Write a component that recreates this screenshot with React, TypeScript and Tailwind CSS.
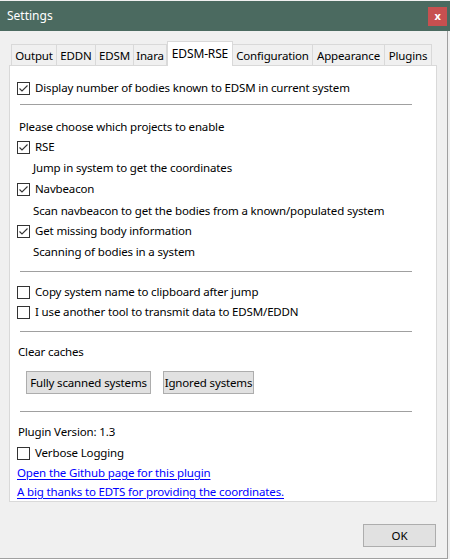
const font = { fontFamily: '"Noto Sans", "Segoe UI", sans-serif' };

const tabs = [
  { label: "Output", w: "w-[46px]" },
  { label: "EDDN", w: "w-[39px]" },
  { label: "EDSM", w: "w-[38px]" },
  { label: "Inara", w: "w-[33px]" },
  { label: "EDSM-RSE", w: "w-[66px]", active: true },
  { label: "Configuration", w: "w-[80px]" },
  { label: "Appearance", w: "w-[72px]" },
  { label: "Plugins", w: "w-[47px]" },
];

function Check({ checked }: { checked?: boolean }) {
  return (
    <span className="w-[13px] h-[13px] border border-[#333333] bg-white flex items-center justify-center shrink-0">
      {checked && (
        <svg width="11" height="11" viewBox="0 0 11 11">
          <polyline points="1.5,5.5 4,8 9.5,2.5" fill="none" stroke="#333333" strokeWidth="1.1" />
        </svg>
      )}
    </span>
  );
}

function CheckRow({ label, checked, mt }: { label: string; checked?: boolean; mt: string }) {
  return (
    <div className={`h-5 flex items-center gap-[5px] pl-[7px] ${mt}`}>
      <Check checked={checked} />
      <span>{label}</span>
    </div>
  );
}

function Sep({ mt }: { mt: string }) {
  return <div className={`h-px bg-[#a0a0a0] ml-[10px] w-[392px] ${mt}`} />;
}

export default function App() {
  return (
    <div
      className="w-[450px] h-[559px] bg-[#f0f0f0] text-[11.5px] tracking-[-0.15px] text-black relative whitespace-nowrap"
      style={font}
    >
      <div className="h-px bg-[#f0f0f0]" />
      <div className="h-[30px] bg-[#4b6a60] flex items-center justify-between pl-[7px]">
        <span className="text-white text-[12px] tracking-normal -mt-[1px]">Settings</span>
        <div className="w-[19px] h-[19px] bg-[#c75050] text-white font-bold text-[11px] flex items-center justify-center mr-[3px]">
          x
        </div>
      </div>
      <div className="border-r border-b border-[#a0a0a0] w-[448px] h-[528px]">
        <div className="flex pl-[11px] pt-[12px] h-[34px] items-end">
          {tabs.map((t) =>
            t.active ? (
              <div
                key={t.label}
                className={`${t.w} h-[25px] bg-white border border-b-0 border-[#d9d9d9] flex items-center justify-center relative z-10 -mb-px text-[12px]`}
              >
                {t.label}
              </div>
            ) : (
              <div
                key={t.label}
                className={`${t.w} h-[21px] border border-l-0 first:border-l border-b-0 border-[#d9d9d9] flex items-center justify-center pt-[2px]`}
              >
                {t.label}
              </div>
            )
          )}
        </div>
        <div className="ml-[9px] w-[428px] h-[437px] bg-white border border-[#d9d9d9] flex flex-col">
          <CheckRow mt="mt-[12px]" checked label="Display number of bodies known to EDSM in current system" />
          <Sep mt="mt-[6px]" />
          <div className="h-5 flex items-center pl-[9px] mt-[12px]">Please choose which projects to enable</div>
          <CheckRow mt="mt-0" checked label="RSE" />
          <div className="h-5 flex items-center pl-[23px] mt-px">Jump in system to get the coordinates</div>
          <CheckRow mt="mt-px" checked label="Navbeacon" />
          <div className="h-5 flex items-center pl-[23px] mt-[2px]">
            Scan navbeacon to get the bodies from a known/populated system
          </div>
          <CheckRow mt="mt-0" checked label="Get missing body information" />
          <div className="h-5 flex items-center pl-[23px] mt-px">Scanning of bodies in a system</div>
          <Sep mt="mt-[9px]" />
          <CheckRow mt="mt-[10px]" label="Copy system name to clipboard after jump" />
          <CheckRow mt="mt-0" label="I use another tool to transmit data to EDSM/EDDN" />
          <Sep mt="mt-[9px]" />
          <div className="h-5 flex items-center pl-[8px] mt-[10px]">Clear caches</div>
          <div className="flex gap-[12px] pl-[16px] mt-[9px]">
            <button className="h-[23px] w-[125px] bg-[#e1e1e1] border border-[#adadad] flex items-center justify-center">
              Fully scanned systems
            </button>
            <button className="h-[23px] w-[91px] bg-[#e1e1e1] border border-[#adadad] flex items-center justify-center">
              Ignored systems
            </button>
          </div>
          <Sep mt="mt-[17px]" />
          <div className="h-5 flex items-center pl-[8px] mt-[10px]">Plugin Version: 1.3</div>
          <CheckRow mt="mt-px" label="Verbose Logging" />
          <div className="h-[19px] flex items-center pl-[7px]">
            <a className="text-[#0000ff] underline underline-offset-2">Open the Github page for this plugin</a>
          </div>
          <div className="h-[19px] flex items-center pl-[7px]">
            <a className="text-[#0000ff] underline underline-offset-2">
              A big thanks to EDTS for providing the coordinates.
            </a>
          </div>
        </div>
        <div className="flex justify-end pr-[11px] mt-[22px]">
          <button className="h-[23px] w-[73px] bg-[#e1e1e1] border border-[#adadad] flex items-center justify-center">
            OK
          </button>
        </div>
      </div>
    </div>
  );
}
